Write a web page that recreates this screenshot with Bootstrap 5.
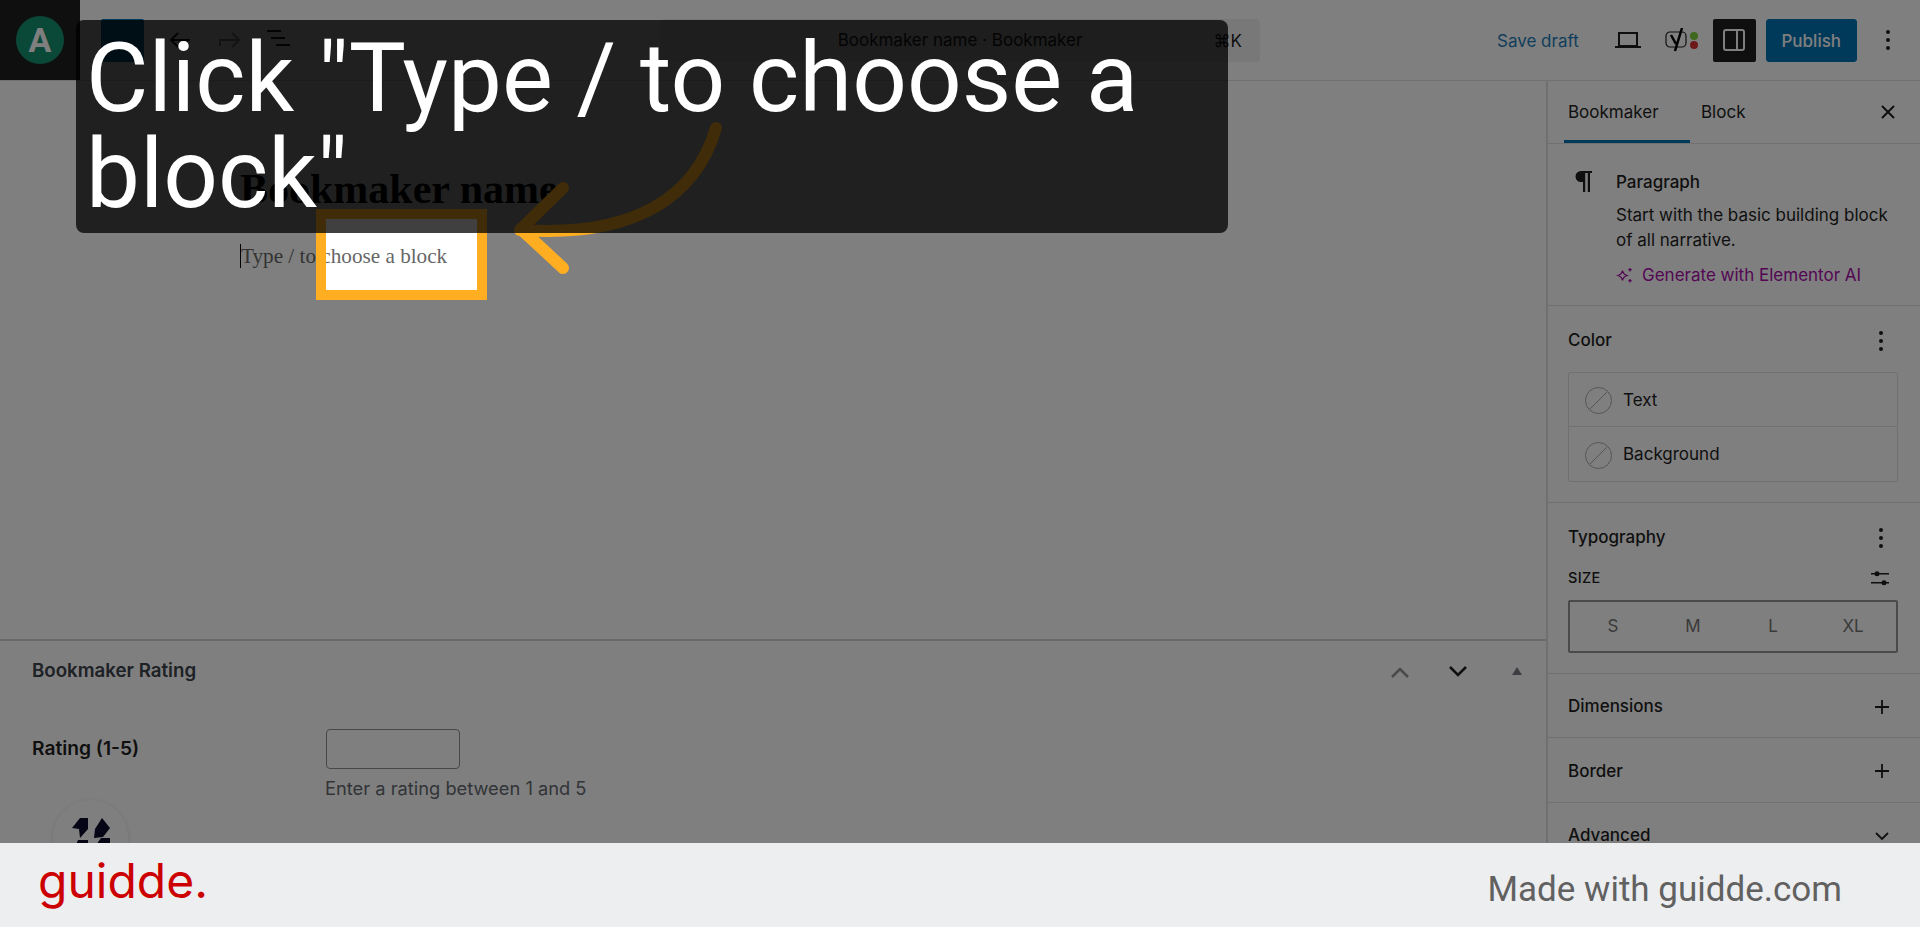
<!DOCTYPE html>
<html>
  <head>
    <meta charset="utf-8">
    <title>Click "Type / to choose a block"</title>
    <link rel="stylesheet" href="https://cdn.jsdelivr.net/npm/bootstrap@5.3.0/dist/css/bootstrap.min.css">
    <style>
      html, body { height: 100%; }
      body {
        background: #fff;
        font-family: "Inter", "Liberation Sans", sans-serif;
        font-size: 17px;
        color: #1e1e1e;
        overflow: hidden;
      }

      .stage { position: relative; height: 843px; overflow: hidden; background: #fff; }

      /* editor underneath the dim layer */
      .top-bar { height: 81px; border-bottom: 1px solid #e0e0e0; padding-right: 29px; }
      .logo-box { width: 80px; height: 80px; background: #1e1e1e; flex: none; }
      .logo-disc {
        width: 48px; height: 48px; border-radius: 50%;
        background: #14906f; color: #fff;
        font: 700 34px/48px "Roboto", sans-serif; text-align: center;
      }
      .inserter { width: 43px; height: 43px; margin-left: 21px; background: #0075b5; border-radius: 2px; }
      .tool-ico { margin-left: 22px; }
      .title-pill {
        width: 600px; height: 43px; margin-left: 368px; padding-top: 2px;
        background: #f0f0f0; border-radius: 4px; position: relative;
      }
      .title-key { position: absolute; right: 18px; top: 12px; line-height: 20px; }
      .save-link { color: #1e7cb8; text-decoration: none; margin-left: 237px; padding-top: 3px; }
      .laptop-ico { margin-left: 35px; }
      .yoast-ico { margin-left: 23px; }
      .panel-btn { width: 43px; height: 43px; background: #1e1e1e; border-radius: 2px; margin-left: 12px; }
      .btn.publish-btn {
        --bs-btn-bg: #0075b5; --bs-btn-border-color: #0075b5; --bs-btn-color: #fff;
        --bs-btn-padding-x: 0; --bs-btn-padding-y: 0; --bs-btn-border-radius: 3px;
        width: 91px; height: 43px; margin-left: 10px; padding-top: 3px; font-size: 17px; font-weight: 500;
      }

      .work-area { height: 762px; }
      .canvas-col { width: 1546px; flex: none; }
      .editor-canvas { height: 558px; padding: 84px 0 0 240px; }
      .post-title { font: 700 42px/48px "Liberation Serif", serif; color: #000; margin: 0; }
      .post-block {
        font: 21.200px/24px "Liberation Serif", serif; color: #666;
        margin: 31px 0 0; border-left: 1px solid #000; width: max-content;
      }
      .meta-box { border-top: 2px solid #d4d4d4; position: relative; height: 204px; padding: 0 32px; }
      .meta-head { height: 58px; padding-top: 2px; font-weight: 600; color: #3c434a; font-size: 18.700px; }
      .meta-arrows { position: absolute; right: 19px; top: 0; height: 60px; width: 170px; }
      .meta-row { margin-top: 30px; }
      .meta-label { width: 294px; font-weight: 600; line-height: 39px; font-size: 19.200px; }
      .form-control.rating-input {
        width: 134px; height: 40px; border: 1px solid #8c8f94; border-radius: 4px;
      }
      .meta-help { color: #646970; font-size: 18.300px; line-height: 24px; margin-top: 7px; margin-left: -1px; }
      .float-disc {
        position: absolute; left: 53px; top: 800px; width: 75px; height: 75px;
        border-radius: 50%; background: #fff; box-shadow: 0 1px 5px rgba(0,0,0,.12);
      }
      .float-logo { display: block; margin: 5px 0 0 7px; }

      .side-bar { width: 374px; flex: none; border-left: 2px solid #e0e0e0; }
      .side-tabs { height: 63px; border-bottom: 1px solid #e0e0e0; padding-left: 16px; position: relative; }
      .side-tab { width: 126px; height: 62px; line-height: 62px; padding-left: 4px; border-bottom: 3px solid transparent; }
      .side-tab.on { border-bottom-color: #0075b5; }
      .side-tab + .side-tab { margin-left: 7px; }
      .side-close { position: absolute; right: 22px; top: 21px; }
      .block-card { height: 162px; border-bottom: 1px solid #e0e0e0; padding: 23px 0 0 27px; }
      .block-ico { width: 41px; flex: none; padding-top: 4px; }
      .block-name { font-weight: 500; line-height: 30px; }
      .block-text { line-height: 25px; margin-top: 6px; }
      .ai-link { color: #a80ca8; text-decoration: none; display: flex; align-items: center; gap: 8px; margin-top: 10px; line-height: 25px; }
      .tool-panel { border-bottom: 1px solid #e0e0e0; padding: 0 20px 20px; }
      .tool-panel.bare { padding-bottom: 0; }
      .panel-head { height: 66px; padding-top: 3px; font-weight: 500; }
      .panel-head.slim { height: 63.300px; }
      .dots { display: block; margin-right: 16px; }
      .head-ico { margin-right: 10px; }
      .list-group.color-list { --bs-list-group-border-color: #e0e0e0; --bs-list-group-border-radius: 2px; width: 330px; }
      .list-group-item.color-row {
        height: 55px; padding: 2px 0 0 16px; display: flex; align-items: center; gap: 11px; color: #1e1e1e; font-size: 17px;
      }
      .no-colour { width: 27px; height: 27px; flex: none; }
      .size-head { font-size: 14.500px; font-weight: 500; letter-spacing: .3px; height: 30px; margin-top: -6px; }
      .size-group { width: 330px; height: 53px; border: 2px solid #949494; border-radius: 2px; margin-top: 7px; padding: 0 3px; }
      .size-opt { flex: 1 1 0; text-align: center; color: #757575; font-size: 17px; }

      /* dim layer, spotlight and callout */
      .spot {
        position: absolute; left: 316px; top: 209px; width: 171px; height: 91px;
        border: 10px solid #ffae21;
        box-shadow: 0 0 0 2200px rgba(0, 0, 0, .5);
      }
      .arrow-svg { position: absolute; left: 0; top: 0; }
      .callout {
        position: absolute; left: 76px; top: 20px; width: 1152px; height: 213px;
        background: rgba(0, 0, 0, .75); border-radius: 8px; padding: 10px 10px;
        color: #fff; font: 400 96px/96px "Roboto", sans-serif;
      }

      .foot-bar { height: 84px; background: #edeef0; padding: 0 78px 0 38px; }
      .foot-logo { font: 400 48px/1 "Inter", sans-serif; color: #cc0000; margin-top: -8px; }
      .foot-text { font: 400 35px/1 "Roboto", sans-serif; color: #616161; margin-top: 8px; }
    </style>
  </head>
  <body>
    <div class="stage">
      <div class="top-bar d-flex align-items-center">
        <div class="logo-box d-flex align-items-center justify-content-center">
          <div class="logo-disc">A</div>
        </div>
        <div class="inserter"></div>
        <svg class="tool-ico" width="28" height="24" viewBox="0 0 28 24" fill="none" stroke="#1e1e1e" stroke-width="2"><path d="M24 12H5M12 5l-7 7 7 7"/></svg>
        <svg class="tool-ico" width="28" height="24" viewBox="0 0 28 24" fill="none" stroke="#949494" stroke-width="2"><path d="M4 18v-6h19M16 5l7 7-7 7"/></svg>
        <svg class="tool-ico" width="26" height="24" viewBox="0 0 26 24" fill="none" stroke="#1e1e1e" stroke-width="2"><path d="M1 3h14M5 10h14M10 17h14"/></svg>
        <div class="title-pill d-flex align-items-center justify-content-center">
          <span>Bookmaker name · Bookmaker</span>
          <span class="title-key">⌘K</span>
        </div>
        <a class="save-link" href="#">Save draft</a>
        <svg class="laptop-ico" width="28" height="20" viewBox="0 0 28 20" fill="none" stroke="#1e1e1e" stroke-width="2"><path d="M5 3h18v13H5zM1 17h26"/></svg>
        <svg class="yoast-ico" width="36" height="24" viewBox="0 0 36 24"><rect x="1" y="4" width="20" height="15" rx="4" fill="none" stroke="#1e1e1e" stroke-width="1.200"/><path d="M6 7l5 9M17 0l-7 23" fill="none" stroke="#000" stroke-width="2.500"/><circle cx="29" cy="8" r="4" fill="#7ad03a"/><circle cx="29" cy="17" r="4" fill="#dc3232"/></svg>
        <div class="panel-btn d-flex align-items-center justify-content-center">
          <svg width="24" height="24" viewBox="0 0 24 24" fill="none" stroke="#fff" stroke-width="2"><rect x="2" y="2" width="20" height="20" rx="2"/><path d="M15 2v20"/></svg>
        </div>
        <button class="btn publish-btn" type="button">Publish</button>
        <svg class="ms-auto" width="6" height="22" viewBox="0 0 6 22" fill="#1e1e1e"><circle cx="3" cy="3" r="2"/><circle cx="3" cy="11" r="2"/><circle cx="3" cy="19" r="2"/></svg>
      </div>

      <div class="work-area d-flex">
        <div class="canvas-col">
          <div class="editor-canvas">
            <h1 class="post-title">Bookmaker name</h1>
            <p class="post-block">Type / to choose a block</p>
          </div>
          <div class="meta-box">
            <div class="meta-head d-flex align-items-center">Bookmaker Rating</div>
            <div class="meta-arrows">
              <svg width="170" height="60" viewBox="0 0 170 60" fill="none" stroke-width="2.500">
                <path d="M35 36l8-8 8 8" stroke="#949494"/>
                <path d="M93 26l8 8 8-8" stroke="#1e1e1e"/>
                <path d="M155 34l5-8 5 8z" fill="#787c82" stroke="none"/>
              </svg>
            </div>
            <div class="meta-row d-flex">
              <div class="meta-label">Rating (1-5)</div>
              <div>
                <input class="form-control rating-input" type="text">
                <div class="meta-help">Enter a rating between 1 and 5</div>
              </div>
            </div>
          </div>
        </div>

        <div class="side-bar">
          <div class="side-tabs d-flex">
            <div class="side-tab on">Bookmaker</div>
            <div class="side-tab">Block</div>
            <svg class="side-close" width="20" height="20" viewBox="0 0 20 20" fill="none" stroke="#1e1e1e" stroke-width="2"><path d="M4 4l12 12M16 4L4 16"/></svg>
          </div>

          <div class="block-card d-flex">
            <div class="block-ico">
              <svg class="d-block" width="17" height="21" viewBox="0 0 17 21" fill="#1e1e1e"><path d="M17 0H6a5.500 5.500 0 0 0 0 11h2v10h2.200V2h2.600v19H15V2h2z"/></svg>
            </div>
            <div>
              <div class="block-name">Paragraph</div>
              <div class="block-text">Start with the basic building block<br>of all narrative.</div>
              <a class="ai-link" href="#">
                <svg width="18" height="17" viewBox="0 0 18 17" fill="none" stroke="#a80ca8" stroke-width="1.300"><path d="M6.500 3.500c.5 3 1.500 4 4.500 5-3 1-4 2-4.500 5-.5-3-1.500-4-4.500-5 3-1 4-2 4.500-5z"/><path d="M14 1v3.400M12.300 2.700h3.400M14 12v3.400M12.300 13.700h3.400"/></svg>
                Generate with Elementor AI
              </a>
            </div>
          </div>

          <div class="tool-panel">
            <div class="panel-head d-flex align-items-center justify-content-between">
              Color
              <svg class="dots" width="6" height="20" viewBox="0 0 6 20" fill="#1e1e1e"><circle cx="3" cy="2" r="2"/><circle cx="3" cy="10" r="2"/><circle cx="3" cy="18" r="2"/></svg>
            </div>
            <div class="list-group color-list">
              <div class="list-group-item color-row">
                <svg class="no-colour" viewBox="0 0 27 27" fill="none" stroke="#aaa"><circle cx="13.500" cy="13.500" r="13"/><path d="M5 22L22 5"/></svg>
                Text
              </div>
              <div class="list-group-item color-row">
                <svg class="no-colour" viewBox="0 0 27 27" fill="none" stroke="#aaa"><circle cx="13.500" cy="13.500" r="13"/><path d="M5 22L22 5"/></svg>
                Background
              </div>
            </div>
          </div>

          <div class="tool-panel">
            <div class="panel-head d-flex align-items-center justify-content-between">
              Typography
              <svg class="dots" width="6" height="20" viewBox="0 0 6 20" fill="#1e1e1e"><circle cx="3" cy="2" r="2"/><circle cx="3" cy="10" r="2"/><circle cx="3" cy="18" r="2"/></svg>
            </div>
            <div class="size-head d-flex align-items-center justify-content-between">
              SIZE
              <svg class="head-ico" width="20" height="16" viewBox="0 0 20 16" fill="#1e1e1e"><path d="M1 3h18v1.500H1zM1 12h18v1.500H1z"/><circle cx="7" cy="3.700" r="2.500"/><circle cx="14" cy="12.700" r="2.500"/></svg>
            </div>
            <div class="size-group d-flex align-items-center">
              <span class="size-opt">S</span><span class="size-opt">M</span><span class="size-opt">L</span><span class="size-opt">XL</span>
            </div>
          </div>

          <div class="tool-panel bare">
            <div class="panel-head slim d-flex align-items-center justify-content-between">
              Dimensions
              <svg class="head-ico" width="16" height="16" viewBox="0 0 16 16" fill="none" stroke="#1e1e1e" stroke-width="1.800"><path d="M8 1v14M1 8h14"/></svg>
            </div>
          </div>
          <div class="tool-panel bare">
            <div class="panel-head slim d-flex align-items-center justify-content-between">
              Border
              <svg class="head-ico" width="16" height="16" viewBox="0 0 16 16" fill="none" stroke="#1e1e1e" stroke-width="1.800"><path d="M8 1v14M1 8h14"/></svg>
            </div>
          </div>
          <div class="tool-panel bare">
            <div class="panel-head slim d-flex align-items-center justify-content-between">
              Advanced
              <svg class="head-ico" width="16" height="10" viewBox="0 0 16 10" fill="none" stroke="#1e1e1e" stroke-width="1.800"><path d="M2 2l6 6 6-6"/></svg>
            </div>
          </div>
        </div>
      </div>

      <div class="float-disc">
        <svg class="float-logo" width="60" height="40" viewBox="0 0 60 40" fill="#0a0a2a"><path d="M12 23l8-10h8v11l-8 9-1-9zM35 24l7-11 8 10-7 9-9 1zM16 40l2-5h10v5zM36 40l5-7h9v7z"/></svg>
      </div>

      <div class="spot"></div>

      <svg class="arrow-svg" width="1920" height="843" viewBox="0 0 1920 843" fill="none" stroke="#ffae21" stroke-width="12" stroke-linecap="round" stroke-linejoin="round">
        <path d="M716 128C696 196 636 238 520 230"/>
        <path d="M563 188L521 229L563 268"/>
      </svg>

      <div class="callout">Click "Type / to choose a block"</div>
    </div>

    <div class="foot-bar d-flex align-items-center justify-content-between">
      <div class="foot-logo">guidde.</div>
      <div class="foot-text">Made with guidde.com</div>
    </div>

    <script src="https://cdn.jsdelivr.net/npm/bootstrap@5.3.0/dist/js/bootstrap.bundle.min.js"></script>
  </body>
</html>
